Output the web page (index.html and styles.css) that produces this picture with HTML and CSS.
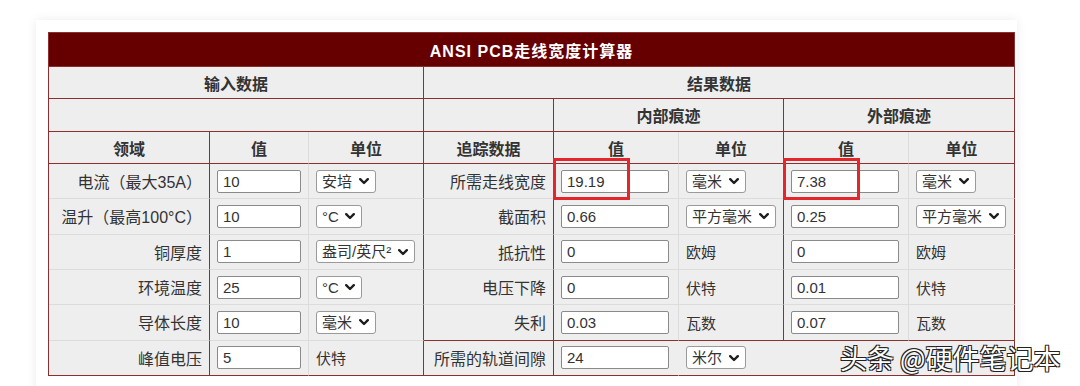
FILE: index.html
```html
<!DOCTYPE html>
<html lang="zh-CN">
<head>
  <meta charset="UTF-8">
  <meta name="viewport" content="width=device-width, initial-scale=1.0">
  <title>ANSI PCB走线宽度计算器</title>
  <link rel="stylesheet" href="styles.css">
</head>
<body>

  <div class="card">
    <table class="calc">
      <colgroup>
        <col style="width: 161px">
        <col style="width: 99px">
        <col style="width: 115px">
        <col style="width: 130px">
        <col style="width: 125px">
        <col style="width: 105px">
        <col style="width: 125px">
        <col style="width: 106px">
      </colgroup>
      <tr class="row-title">
        <td colspan="8" class="title">ANSI PCB走线宽度计算器</td>
      </tr>
      <tr class="row-head">
        <th colspan="3" class="rr rb">输入数据</th>
        <th colspan="5" class="rb last">结果数据</th>
      </tr>
      <tr class="row-head mid">
        <th colspan="3" class="rr rb"></th>
        <th class="rr rb"></th>
        <th colspan="2" class="rr rb">内部痕迹</th>
        <th colspan="2" class="rb last">外部痕迹</th>
      </tr>
      <tr class="row-head">
        <th class="rr rb">领域</th>
        <th class="rb">值</th>
        <th class="rr rb">单位</th>
        <th class="rr rb">追踪数据</th>
        <th class="rb">值</th>
        <th class="rr rb">单位</th>
        <th class="rb">值</th>
        <th class="rb last">单位</th>
      </tr>
      <tr>
        <td class="label rr">电流（最大35A）</td>
        <td class="field"><input class="num" type="text" value="10"></td>
        <td class="field rr"><span class="sel"><select><option>安培</option></select><svg class="chev" width="10" height="7" viewBox="0 0 10 7"><path d="M1.2 1.2 L5 5 L8.8 1.2"/></svg></span></td>
        <td class="label rr">所需走线宽度</td>
        <td class="field mark-cell"><input class="num wide" type="text" value="19.19"><span class="mark"></span></td>
        <td class="field rr"><span class="sel"><select><option>毫米</option></select><svg class="chev" width="10" height="7" viewBox="0 0 10 7"><path d="M1.2 1.2 L5 5 L8.8 1.2"/></svg></span></td>
        <td class="field mark-cell"><input class="num wide" type="text" value="7.38"><span class="mark"></span></td>
        <td class="field last"><span class="sel"><select><option>毫米</option></select><svg class="chev" width="10" height="7" viewBox="0 0 10 7"><path d="M1.2 1.2 L5 5 L8.8 1.2"/></svg></span></td>
      </tr>
      <tr>
        <td class="label rr">温升（最高100°C）</td>
        <td class="field"><input class="num" type="text" value="10"></td>
        <td class="field rr"><span class="sel"><select><option>°C</option></select><svg class="chev" width="10" height="7" viewBox="0 0 10 7"><path d="M1.2 1.2 L5 5 L8.8 1.2"/></svg></span></td>
        <td class="label rr">截面积</td>
        <td class="field"><input class="num wide" type="text" value="0.66"></td>
        <td class="field rr"><span class="sel"><select><option>平方毫米</option></select><svg class="chev" width="10" height="7" viewBox="0 0 10 7"><path d="M1.2 1.2 L5 5 L8.8 1.2"/></svg></span></td>
        <td class="field"><input class="num wide" type="text" value="0.25"></td>
        <td class="field last"><span class="sel"><select><option>平方毫米</option></select><svg class="chev" width="10" height="7" viewBox="0 0 10 7"><path d="M1.2 1.2 L5 5 L8.8 1.2"/></svg></span></td>
      </tr>
      <tr>
        <td class="label rr">铜厚度</td>
        <td class="field"><input class="num" type="text" value="1"></td>
        <td class="field rr"><span class="sel"><select><option>盎司/英尺²</option></select><svg class="chev" width="10" height="7" viewBox="0 0 10 7"><path d="M1.2 1.2 L5 5 L8.8 1.2"/></svg></span></td>
        <td class="label rr">抵抗性</td>
        <td class="field"><input class="num wide" type="text" value="0"></td>
        <td class="field rr">欧姆</td>
        <td class="field"><input class="num wide" type="text" value="0"></td>
        <td class="field last">欧姆</td>
      </tr>
      <tr>
        <td class="label rr">环境温度</td>
        <td class="field"><input class="num" type="text" value="25"></td>
        <td class="field rr"><span class="sel"><select><option>°C</option></select><svg class="chev" width="10" height="7" viewBox="0 0 10 7"><path d="M1.2 1.2 L5 5 L8.8 1.2"/></svg></span></td>
        <td class="label rr">电压下降</td>
        <td class="field"><input class="num wide" type="text" value="0"></td>
        <td class="field rr">伏特</td>
        <td class="field"><input class="num wide" type="text" value="0.01"></td>
        <td class="field last">伏特</td>
      </tr>
      <tr>
        <td class="label rr">导体长度</td>
        <td class="field"><input class="num" type="text" value="10"></td>
        <td class="field rr"><span class="sel"><select><option>毫米</option></select><svg class="chev" width="10" height="7" viewBox="0 0 10 7"><path d="M1.2 1.2 L5 5 L8.8 1.2"/></svg></span></td>
        <td class="label rr rb">失利</td>
        <td class="field rb"><input class="num wide" type="text" value="0.03"></td>
        <td class="field rr rb">瓦数</td>
        <td class="field rb"><input class="num wide" type="text" value="0.07"></td>
        <td class="field rb last">瓦数</td>
      </tr>
      <tr class="row-end">
        <td class="label rr">峰值电压</td>
        <td class="field"><input class="num" type="text" value="5"></td>
        <td class="field rr">伏特</td>
        <td class="label rr">所需的轨道间隙</td>
        <td class="field clear"><input class="num wide" type="text" value="24"></td>
        <td colspan="3" class="field last"><span class="sel"><select><option>米尔</option></select><svg class="chev" width="10" height="7" viewBox="0 0 10 7"><path d="M1.2 1.2 L5 5 L8.8 1.2"/></svg></span></td>
      </tr>
    </table>
  </div>

  <div class="watermark">头条 @硬件笔记本</div>

</body>
</html>
```

FILE: styles.css
```css
/* General */
body {
  margin: 0;
  padding: 0;
  background-color: #fff;
  color: #333;
  font-family: "Liberation Sans", "Noto Sans CJK SC", sans-serif;
  font-size: 15px;
  position: relative;
  height: 386px;
  overflow: hidden;
}

/* Tarjeta */
.card {
  width: 966px;
  margin: 20px 0 0 36px;
  padding: 12px 3px 20px 12px;
  background-color: #fff;
  box-shadow: 0 0 10px rgba(0, 0, 0, 0.08);
}

/* Tabla */
.calc {
  width: 966px;
  table-layout: fixed;
  border-collapse: separate;
  border-spacing: 0;
  border-top: 1px solid #8c2f2f;
  border-left: 1px solid #8c2f2f;
}

.calc tr {
  height: 35.33px;
}

.calc .row-title {
  height: 34px;
}

.calc .row-head {
  height: 32px;
}

.calc .row-head.mid {
  height: 33px;
}

.calc th,
.calc td {
  background-color: #eeeeee;
  border-right: 1px solid #dcdcdc;
  border-bottom: 1px solid #dcdcdc;
  padding: 0 7px;
  white-space: nowrap;
}

.calc th {
  font-weight: bold;
  text-align: center;
  font-size: 16px;
  color: #333;
}

.calc .rr {
  border-right-color: #8c2f2f;
}

.calc .rb {
  border-bottom-color: #8c2f2f;
}

.calc .last {
  border-right-color: #8c2f2f;
}

.calc .clear {
  border-right-color: transparent;
}

.calc .row-end td {
  border-bottom-color: #8c2f2f;
}

.calc .title {
  background-color: #660000;
  color: #fff;
  font-weight: bold;
  font-size: 16px;
  letter-spacing: 1px;
  text-align: center;
  border-bottom-color: #8c2f2f;
  border-right-color: #8c2f2f;
}

.label {
  text-align: right;
  font-size: 16px;
}

.field {
  text-align: left;
  font-size: 15px;
}

/* Campos */
.num {
  box-sizing: border-box;
  width: 84px;
  height: 23px;
  padding: 1px 5px;
  border: 1px solid #8a8a8a;
  border-radius: 2px;
  font-family: "Liberation Sans", "Noto Sans CJK SC", sans-serif;
  font-size: 15px;
  color: #333;
  background-color: #fff;
  vertical-align: middle;
}

.num.wide {
  width: 108px;
}

.sel {
  position: relative;
  display: inline-block;
  vertical-align: middle;
}

.sel select {
  -webkit-appearance: none;
  appearance: none;
  display: block;
  height: 23px;
  margin: 0;
  padding: 0 22px 0 5px;
  border: 1px solid #9a9a9a;
  border-radius: 3px;
  font-family: "Liberation Sans", "Noto Sans CJK SC", sans-serif;
  font-size: 15px;
  color: #333;
  background-color: #fff;
}

.chev {
  position: absolute;
  right: 7px;
  top: 50%;
  margin-top: -3px;
  pointer-events: none;
}

.chev path {
  fill: none;
  stroke: #1e1e1e;
  stroke-width: 2.4;
  stroke-linecap: round;
  stroke-linejoin: round;
}

/* Marcas rojas */
.mark-cell {
  position: relative;
}

.mark {
  position: absolute;
  left: -1px;
  top: -6px;
  width: 71px;
  height: 36px;
  border: 3px solid #e3262b;
}

/* Marca de agua */
.watermark {
  position: absolute;
  left: 840px;
  top: 344px;
  line-height: 1;
  font-family: "Noto Sans CJK SC", sans-serif;
  font-size: 27px;
  color: #fff;
  text-shadow: 1px 1px 0 #222, -1px -1px 0 #222, 1px -1px 0 #222, -1px 1px 0 #222;
}
```
